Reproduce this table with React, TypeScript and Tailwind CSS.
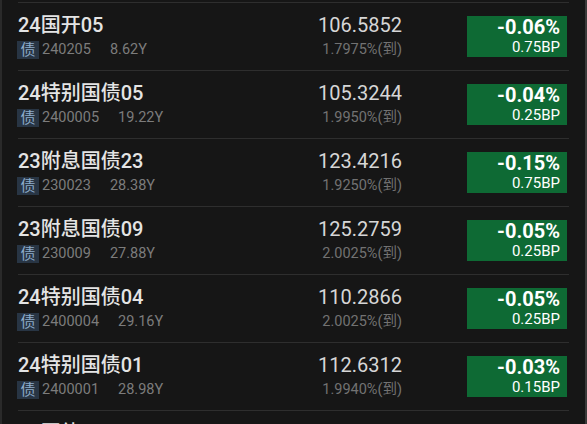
const rows = [
  { name: '24国开05', code: '240205', term: '8.62Y', price: '106.5852', ytm: '1.7975%(到)', chg: '-0.06%', bp: '0.75BP' },
  { name: '24特别国债05', code: '2400005', term: '19.22Y', price: '105.3244', ytm: '1.9950%(到)', chg: '-0.04%', bp: '0.25BP' },
  { name: '23附息国债23', code: '230023', term: '28.38Y', price: '123.4216', ytm: '1.9250%(到)', chg: '-0.15%', bp: '0.75BP' },
  { name: '23附息国债09', code: '230009', term: '27.88Y', price: '125.2759', ytm: '2.0025%(到)', chg: '-0.05%', bp: '0.25BP' },
  { name: '24特别国债04', code: '2400004', term: '29.16Y', price: '110.2866', ytm: '2.0025%(到)', chg: '-0.05%', bp: '0.25BP' },
  { name: '24特别国债01', code: '2400001', term: '28.98Y', price: '112.6312', ytm: '1.9940%(到)', chg: '-0.03%', bp: '0.15BP' },
  { name: '24国债11', code: '240011', term: '9.75Y', price: '101.8830', ytm: '1.7800%(到)', chg: '-0.02%', bp: '0.25BP' },
]

function Row({ r }: { r: (typeof rows)[number] }) {
  return (
    <div className="flex h-[68px] items-start border-t border-[#2e2e2e]">
      {/* 名称 + 代码 */}
      <div className="flex-1 pt-[9px]">
        <div className="text-[20px] leading-[27px] font-medium text-[#e4e4e4]">{r.name}</div>
        <div className="mt-[2px] flex items-center text-[14.5px] leading-[18px] text-[#7c7c7c]">
          <div className="ml-[-1px] flex h-[18px] w-[22px] items-center justify-center bg-[#283544] text-[15px] text-[#8eaccb]">
            债
          </div>
          <span className="ml-[3px]">{r.code}</span>
          <span className="ml-[19px]">{r.term}</span>
        </div>
      </div>

      {/* 价格 */}
      <div className="pt-[8px] text-right">
        <div className="text-[20px] leading-[28px] text-[#d6d6d6]">{r.price}</div>
        <div className="mt-px text-[14.5px] leading-[20px] text-[#727272]">{r.ytm}</div>
      </div>

      {/* 涨跌 */}
      <div className="mt-[13px] mr-[2px] ml-[65px] flex h-[41px] w-[100px] flex-col items-end bg-[#0e6a34] pr-[7px] text-white">
        <div className="text-[20px] leading-[23px] font-bold">{r.chg}</div>
        <div className="text-[15px] leading-[17px]">{r.bp}</div>
      </div>
    </div>
  )
}

export default function App() {
  return (
    <div
      className="h-[424px] w-[587px] overflow-hidden border-r-2 border-l-2 border-r-[#3a3a3a] border-l-[#2a2a2a] bg-[#161616]"
      style={{ fontFamily: 'Roboto, "Noto Sans CJK SC", sans-serif' }}
    >
      <div className="pt-[2px] pr-[16px] pl-[16px]">
        {rows.map((r) => (
          <Row key={r.code} r={r} />
        ))}
      </div>
    </div>
  )
}
